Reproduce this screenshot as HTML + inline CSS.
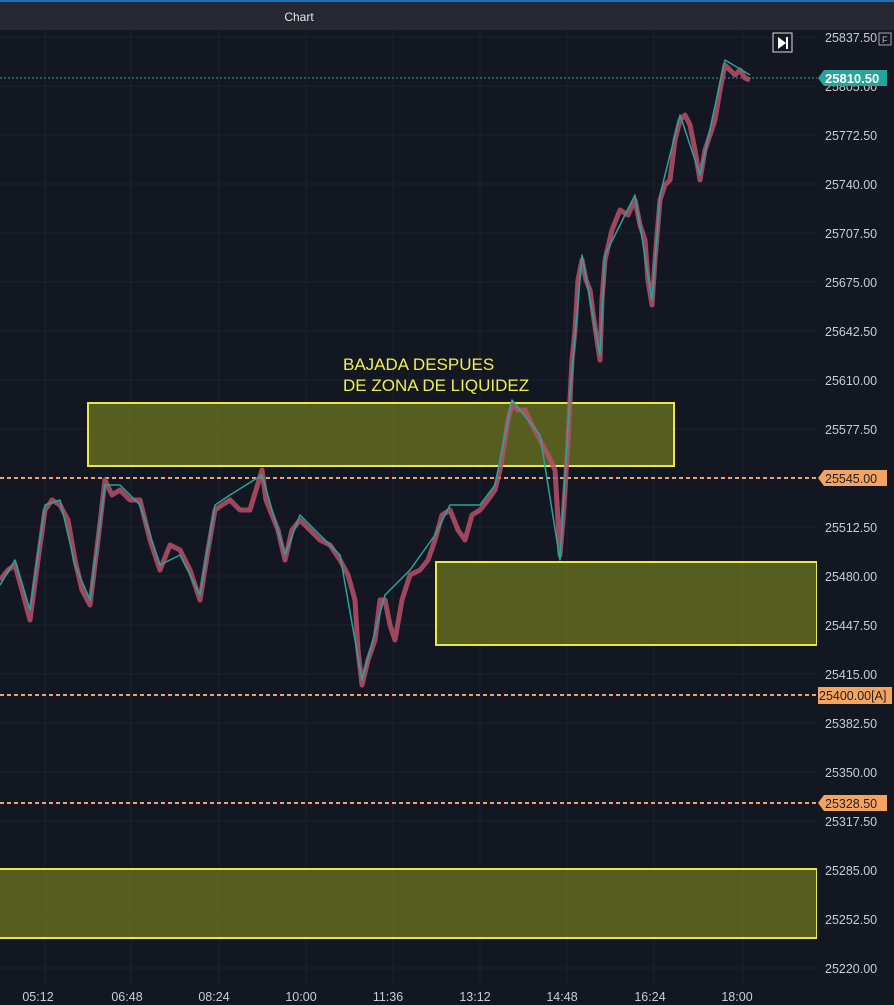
<!DOCTYPE html>
<html><head><style>
body{margin:0;width:894px;height:1005px;background:#131722;overflow:hidden;font-family:"Liberation Sans",sans-serif}
</style></head><body>
<svg width="894" height="1005" xmlns="http://www.w3.org/2000/svg" style="position:absolute;left:0;top:0">
<rect x="0" y="0" width="894" height="30" fill="#262932"/>
<rect x="0" y="0" width="894" height="2" fill="#1e6fc0"/>
<text x="299" y="21" fill="#e6e6e6" font-size="12" text-anchor="middle" font-family="Liberation Sans">Chart</text>
<g stroke="#1e2230" stroke-width="1">
<line x1="45" y1="30" x2="45" y2="985"/><line x1="131" y1="30" x2="131" y2="985"/><line x1="219" y1="30" x2="219" y2="985"/><line x1="306" y1="30" x2="306" y2="985"/><line x1="393" y1="30" x2="393" y2="985"/><line x1="480" y1="30" x2="480" y2="985"/><line x1="567" y1="30" x2="567" y2="985"/><line x1="654" y1="30" x2="654" y2="985"/><line x1="743" y1="30" x2="743" y2="985"/>
<line x1="0" y1="37" x2="817" y2="37"/><line x1="0" y1="86" x2="817" y2="86"/><line x1="0" y1="135" x2="817" y2="135"/><line x1="0" y1="184" x2="817" y2="184"/><line x1="0" y1="233" x2="817" y2="233"/><line x1="0" y1="282" x2="817" y2="282"/><line x1="0" y1="331" x2="817" y2="331"/><line x1="0" y1="380" x2="817" y2="380"/><line x1="0" y1="429" x2="817" y2="429"/><line x1="0" y1="478" x2="817" y2="478"/><line x1="0" y1="527" x2="817" y2="527"/><line x1="0" y1="576" x2="817" y2="576"/><line x1="0" y1="625" x2="817" y2="625"/><line x1="0" y1="674" x2="817" y2="674"/><line x1="0" y1="723" x2="817" y2="723"/><line x1="0" y1="772" x2="817" y2="772"/><line x1="0" y1="821" x2="817" y2="821"/><line x1="0" y1="870" x2="817" y2="870"/><line x1="0" y1="919" x2="817" y2="919"/><line x1="0" y1="968" x2="817" y2="968"/>
</g>
<line x1="0" y1="78" x2="817" y2="78" stroke="#26a69a" stroke-dasharray="2,2"/>
<g stroke="#f0a070" stroke-width="2" stroke-dasharray="4,3">
<line x1="0" y1="478" x2="817" y2="478"/><line x1="0" y1="695" x2="817" y2="695"/><line x1="0" y1="803" x2="817" y2="803"/>
</g>
<g fill="rgba(130,140,30,0.6)" stroke="#e8e84a" stroke-width="2">
<rect x="88" y="403" width="586" height="63"/>
<rect x="436" y="562" width="381" height="83"/>
<rect x="-5" y="869" width="822" height="69"/>
</g>
<polyline fill="none" stroke="#b8506a" stroke-width="5" stroke-linejoin="round" opacity="0.85" points="0,580 8,570 15,565 22,590 30,620 38,560 45,510 52,500 60,505 68,520 75,560 82,590 90,605 98,540 105,480 112,495 120,490 130,500 140,500 150,540 160,570 170,545 180,550 190,570 200,600 208,550 215,510 222,505 230,500 240,510 250,510 256,490 262,470 266,500 270,510 278,530 285,560 292,530 300,520 310,530 320,540 330,545 340,560 348,575 355,600 358,650 362,685 368,660 375,640 380,600 385,600 390,625 395,640 402,600 410,575 420,570 428,560 435,540 442,515 450,510 458,530 465,540 472,515 480,510 488,500 495,490 500,470 505,440 508,420 512,405 518,410 525,410 532,425 540,440 548,455 555,470 558,520 560,555 563,520 565,490 568,440 570,400 572,360 575,330 578,280 582,260 586,280 590,290 594,320 600,360 602,300 605,260 612,230 620,210 628,215 635,200 640,225 645,240 648,280 652,305 655,260 660,200 665,185 670,180 675,140 680,120 685,115 690,125 695,150 700,180 705,150 710,135 715,120 720,90 725,65 730,70 735,75 740,70 745,78 750,80"/>
<polyline fill="none" stroke="#26a69a" stroke-width="1.5" stroke-linejoin="round" points="0,585 15,560 30,610 45,505 60,500 75,565 90,600 105,485 120,485 140,505 160,565 180,555 200,595 215,505 230,495 262,475 285,555 300,515 340,555 362,680 385,595 410,570 435,535 450,505 480,505 495,485 512,400 540,435 560,560 570,395 582,255 600,355 605,255 635,195 652,300 660,195 680,115 700,175 725,60 750,75"/>
<rect x="817" y="30" width="77" height="975" fill="#131722"/>
<g fill="#c8ccd4" font-size="12.5" font-family="Liberation Sans">
<text x="825" y="42">25837.50</text><text x="825" y="91">25805.00</text><text x="825" y="140">25772.50</text><text x="825" y="189">25740.00</text><text x="825" y="238">25707.50</text><text x="825" y="287">25675.00</text><text x="825" y="336">25642.50</text><text x="825" y="385">25610.00</text><text x="825" y="434">25577.50</text><text x="825" y="532">25512.50</text><text x="825" y="581">25480.00</text><text x="825" y="630">25447.50</text><text x="825" y="679">25415.00</text><text x="825" y="728">25382.50</text><text x="825" y="777">25350.00</text><text x="825" y="826">25317.50</text><text x="825" y="875">25285.00</text><text x="825" y="924">25252.50</text><text x="825" y="973">25220.00</text>
<text x="38" y="1001" text-anchor="middle">05:12</text><text x="127" y="1001" text-anchor="middle">06:48</text><text x="214" y="1001" text-anchor="middle">08:24</text><text x="301" y="1001" text-anchor="middle">10:00</text><text x="388" y="1001" text-anchor="middle">11:36</text><text x="475" y="1001" text-anchor="middle">13:12</text><text x="562" y="1001" text-anchor="middle">14:48</text><text x="650" y="1001" text-anchor="middle">16:24</text><text x="737" y="1001" text-anchor="middle">18:00</text>
</g>
<path d="M818,78 L824,70 H887 V86 H824 Z" fill="#26a69a"/>
<text x="825" y="83" fill="#fff" font-size="13" font-weight="bold">25810.50</text>
<path d="M818,478 L824,470 H887 V486 H824 Z" fill="#f4a460"/>
<text x="825" y="483" fill="#222" font-size="12.5">25545.00</text>
<rect x="818" y="687" width="74" height="17" fill="#f4a460"/>
<text x="819" y="700" fill="#222" font-size="12.5">25400.00[A]</text>
<path d="M818,803 L824,795 H887 V811 H824 Z" fill="#f4a460"/>
<text x="825" y="808" fill="#222" font-size="12.5">25328.50</text>
<rect x="773" y="33" width="19" height="19" fill="none" stroke="#ddd" stroke-width="1"/>
<path d="M778,37 L786,43 L778,49 Z" fill="#fff"/><rect x="786" y="37" width="2" height="12" fill="#fff"/>
<rect x="879" y="33" width="12" height="12" fill="none" stroke="#aaa"/>
<text x="882" y="43" fill="#bbb" font-size="9">F</text>
<text x="343" y="370" fill="#f0f04a" font-size="17">BAJADA DESPUES</text>
<text x="343" y="391" fill="#f0f04a" font-size="17">DE ZONA DE LIQUIDEZ</text>
</svg>
</body></html>
